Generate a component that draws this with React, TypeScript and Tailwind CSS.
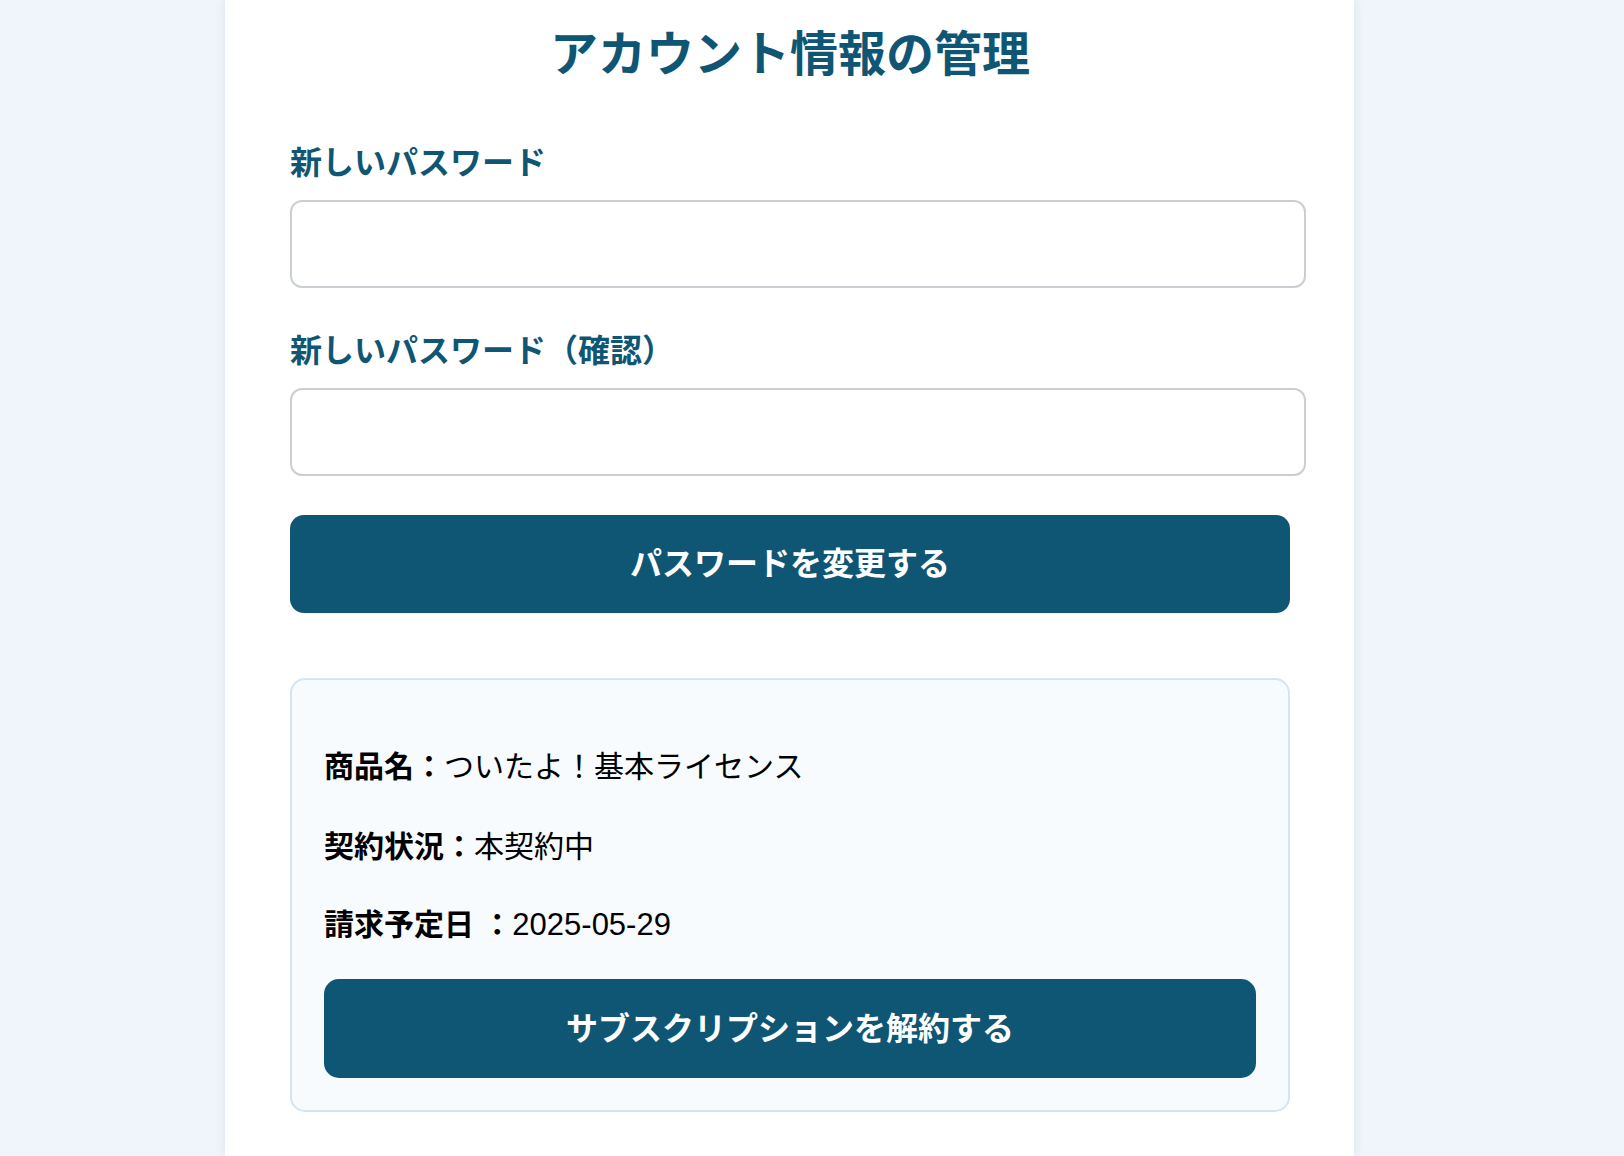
import React from "react";

const font = { fontFamily: '"Liberation Sans", "Noto Sans CJK JP", sans-serif' };

export default function App() {
  return (
    <div
      className="h-[1156px] w-full overflow-hidden bg-[#eff5fa]"
      style={font}
    >
      <div className="ml-[225px] h-full w-[1129px] bg-white pl-[65px] pr-[64px] pt-[26px] shadow-[0_0_10px_rgba(120,150,180,0.18)]">
        <h1 className="text-center text-[48px] font-bold leading-[58px] text-[#0f5674]">
          アカウント情報の管理
        </h1>

        <label className="mt-[59px] block text-[32px] font-bold leading-[40px] text-[#0f5674]">
          新しいパスワード
        </label>
        <input
          type="password"
          className="mt-[17px] block h-[88px] w-[1016px] rounded-[12px] border-2 border-[#cbcfd3] bg-white px-3 text-[28px] outline-none"
        />

        <label className="mt-[43px] block text-[32px] font-bold leading-[40px] text-[#0f5674]">
          新しいパスワード（確認）
        </label>
        <input
          type="password"
          className="mt-[17px] block h-[88px] w-[1016px] rounded-[12px] border-2 border-[#cbcfd3] bg-white px-3 text-[28px] outline-none"
        />

        <button className="mt-[39px] flex h-[98px] w-full items-center justify-center rounded-[14px] bg-[#0f5674] text-[32px] font-bold text-white">
          パスワードを変更する
        </button>

        <div className="mt-[65px] w-full rounded-[15px] border-2 border-[#d3e5f5] bg-[#f7fbfe] px-[32px] pb-[32px] pt-[67px]">
          <p className="text-[30px] leading-[40px] text-black">
            <span className="font-bold">商品名：</span>ついたよ！基本ライセンス
          </p>
          <p className="mt-[40px] text-[30px] leading-[40px] text-black">
            <span className="font-bold">契約状況：</span>本契約中
          </p>
          <p className="mt-[38px] text-[30px] leading-[40px] text-black">
            <span className="font-bold">請求予定日 ：</span>
            <span className="text-[31px]">2025-05-29</span>
          </p>
          <button className="mt-[34px] flex h-[99px] w-full items-center justify-center rounded-[15px] bg-[#0f5674] text-[32px] font-bold text-white">
            サブスクリプションを解約する
          </button>
        </div>
      </div>
    </div>
  );
}
